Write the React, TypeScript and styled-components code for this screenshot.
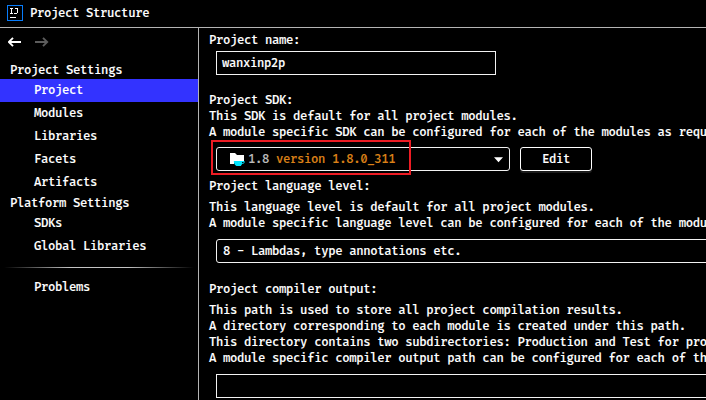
import React from "react";
import styled, { createGlobalStyle } from "styled-components";

const GlobalStyle = createGlobalStyle`
  html, body { margin: 0; background: #000; overflow: hidden; }
  *, *::before, *::after { box-sizing: border-box; }
`;

const Window = styled.div`
  display: flex;
  flex-direction: column;
  width: 706px;
  height: 400px;
  overflow: hidden;
  background: #000;
  color: #fff;
  font: 500 12px/16px "Fira Code", "DejaVu Sans Mono", monospace;
  letter-spacing: -0.375px;
  -webkit-text-stroke: 0.1px currentColor;
  white-space: pre;
`;

const TitleBar = styled.header`
  display: flex;
  flex: none;
  height: 28px;
  padding: 5px 0 0 7px;
  gap: 7px;
  border-bottom: 1px solid #b4b4b4;
`;

const Title = styled.span`
  padding-top: 1px;
`;

const Body = styled.div`
  display: flex;
  flex: 1;
  min-height: 0;
`;

const Sidebar = styled.nav`
  flex: none;
  width: 199px;
  border-right: 1px solid #b4b4b4;
`;

const History = styled.div`
  display: flex;
  gap: 13px;
  height: 34px;
  padding: 9px 0 0 8px;
`;

const GroupTitle = styled.div<{ $height: number; $top: number }>`
  height: ${(p) => p.$height}px;
  padding: ${(p) => p.$top}px 0 0 10px;
  line-height: 16px;
`;

const NavItem = styled.div<{ $selected?: boolean }>`
  height: 23px;
  padding: 4px 0 0 34px;
  background: ${(p) => (p.$selected ? "#3333ff" : "transparent")};
`;

const Divider = styled.div`
  height: 1px;
  margin: 9px 4px 8px;
  background: linear-gradient(90deg, #000, #c4c4c4 35%, #c4c4c4 65%, #000);
`;

const Main = styled.main`
  flex: 1;
  min-width: 0;
  overflow: hidden;
  padding: 4px 0 0 10px;
`;

const Text = styled.div<{ $top?: number }>`
  margin-top: ${(p) => p.$top ?? 0}px;
  height: 16px;
  padding-top: 1px;
`;

const Field = styled.div<{ $width: number; $top: number; $rounded?: boolean }>`
  display: flex;
  align-items: flex-start;
  flex: none;
  width: ${(p) => p.$width}px;
  height: 24px;
  margin: ${(p) => p.$top}px 0 0 7px;
  padding: 4px 10px 0 ${(p) => (p.$rounded ? 6 : 5)}px;
  border: 1px solid #f2f2f2;
  border-radius: ${(p) => (p.$rounded ? 3 : 0)}px;
`;

const SdkRow = styled.div`
  position: relative;
  display: flex;
  gap: 10px;
  margin-top: 7px;
`;

const SdkField = styled(Field)`
  padding: 3px 6px 0 12px;
`;

const SdkName = styled.span`
  margin: 1px 0 0 3px;
  color: #bbb;
`;

const SdkVersion = styled.span`
  flex: 1;
  margin-top: 1px;
  color: #dc8218;
`;

const Button = styled.button`
  width: 72px;
  height: 24px;
  padding: 2px 0 0;
  border: 1px solid #fff;
  border-radius: 3px;
  background: #000;
  box-shadow: 0 2px 0 #1c1c1c;
  color: inherit;
  font: inherit;
  letter-spacing: inherit;
`;

const Highlight = styled.div`
  position: absolute;
  left: 2px;
  top: -7px;
  width: 200px;
  height: 35px;
  border: 2px solid #ed1c24;
`;

const Logo = () => (
  <svg width="16" height="16" viewBox="0 0 16 16" shapeRendering="crispEdges">
    <rect x="0.5" y="0.5" width="15" height="15" fill="#000" stroke="#087cfa" />
    <path
      d="M3 3.5h3M4.5 3v6M3 8.5h3M8 3.5h3M10.5 3v5M7 8.5h3M3 12.5h6"
      fill="none"
      stroke="#fff"
    />
  </svg>
);

const Arrow = ({ forward = false }: { forward?: boolean }) => (
  <svg width="14" height="11" viewBox="0 0 14 11">
    <path
      d={forward ? "M0 5h12.4M8 .8l4.2 4.2L8 9.2" : "M13 5H.6M5 .8L.8 5 5 9.2"}
      fill="none"
      stroke={forward ? "#5c5c5c" : "#fff"}
      strokeWidth="1.9"
    />
  </svg>
);

const JdkIcon = () => (
  <svg width="16" height="16" viewBox="0 0 16 16">
    <path d="M1 2h5l2 2h7v6H5v3H1z" fill="#fff" />
    <path
      d="M4.8 10h9.7q1.5 0 1.2 1.3-.4 1.5-2.4 1.5l-1.5 2.2H7.5Q5 14 4.8 10z"
      fill="#00e5ff"
    />
    <path d="M13 11.5h1.6" stroke="#000" strokeWidth=".9" />
  </svg>
);

const Caret = styled.svg`
  flex: none;
  margin-top: 6px;
`;

const projectItems = ["Project", "Modules", "Libraries", "Facets", "Artifacts"];
const platformItems = ["SDKs", "Global Libraries"];

export default function App() {
  return (
    <Window>
      <GlobalStyle />
      <TitleBar>
        <Logo />
        <Title>Project Structure</Title>
      </TitleBar>
      <Body>
        <Sidebar>
          <History>
            <Arrow />
            <Arrow forward />
          </History>
          <GroupTitle $height={17} $top={1}>Project Settings</GroupTitle>
          {projectItems.map((item) => (
            <NavItem key={item} $selected={item === "Project"}>
              {item}
            </NavItem>
          ))}
          <GroupTitle $height={18} $top={2}>Platform Settings</GroupTitle>
          {platformItems.map((item) => (
            <NavItem key={item}>{item}</NavItem>
          ))}
          <Divider />
          <NavItem>Problems</NavItem>
        </Sidebar>
        <Main>
          <Text>Project name:</Text>
          <Field $width={280} $top={3}>wanxinp2p</Field>
          <Text $top={17}>Project SDK:</Text>
          <Text>This SDK is default for all project modules.</Text>
          <Text>A module specific SDK can be configured for each of the modules as required.</Text>
          <SdkRow>
            <SdkField $width={294} $top={0} $rounded>
              <JdkIcon />
              <SdkName>1.8 </SdkName>
              <SdkVersion>version 1.8.0_311</SdkVersion>
              <Caret width="10" height="6" viewBox="0 0 10 6">
                <path d="M1 .2h9L5.5 5.2z" fill="#fff" />
              </Caret>
            </SdkField>
            <Button>Edit</Button>
            <Highlight />
          </SdkRow>
          <Text $top={7}>Project language level:</Text>
          <Text $top={5}>This language level is default for all project modules.</Text>
          <Text>A module specific language level can be configured for each of the modules as required.</Text>
          <Field $width={560} $top={8} $rounded>8 - Lambdas, type annotations etc.</Field>
          <Text $top={18}>Project compiler output:</Text>
          <Text $top={5}>This path is used to store all project compilation results.</Text>
          <Text>A directory corresponding to each module is created under this path.</Text>
          <Text>This directory contains two subdirectories: Production and Test for production code and test sources.</Text>
          <Text>A module specific compiler output path can be configured for each of the modules as required.</Text>
          <Field $width={560} $top={8} />
        </Main>
      </Body>
    </Window>
  );
}
